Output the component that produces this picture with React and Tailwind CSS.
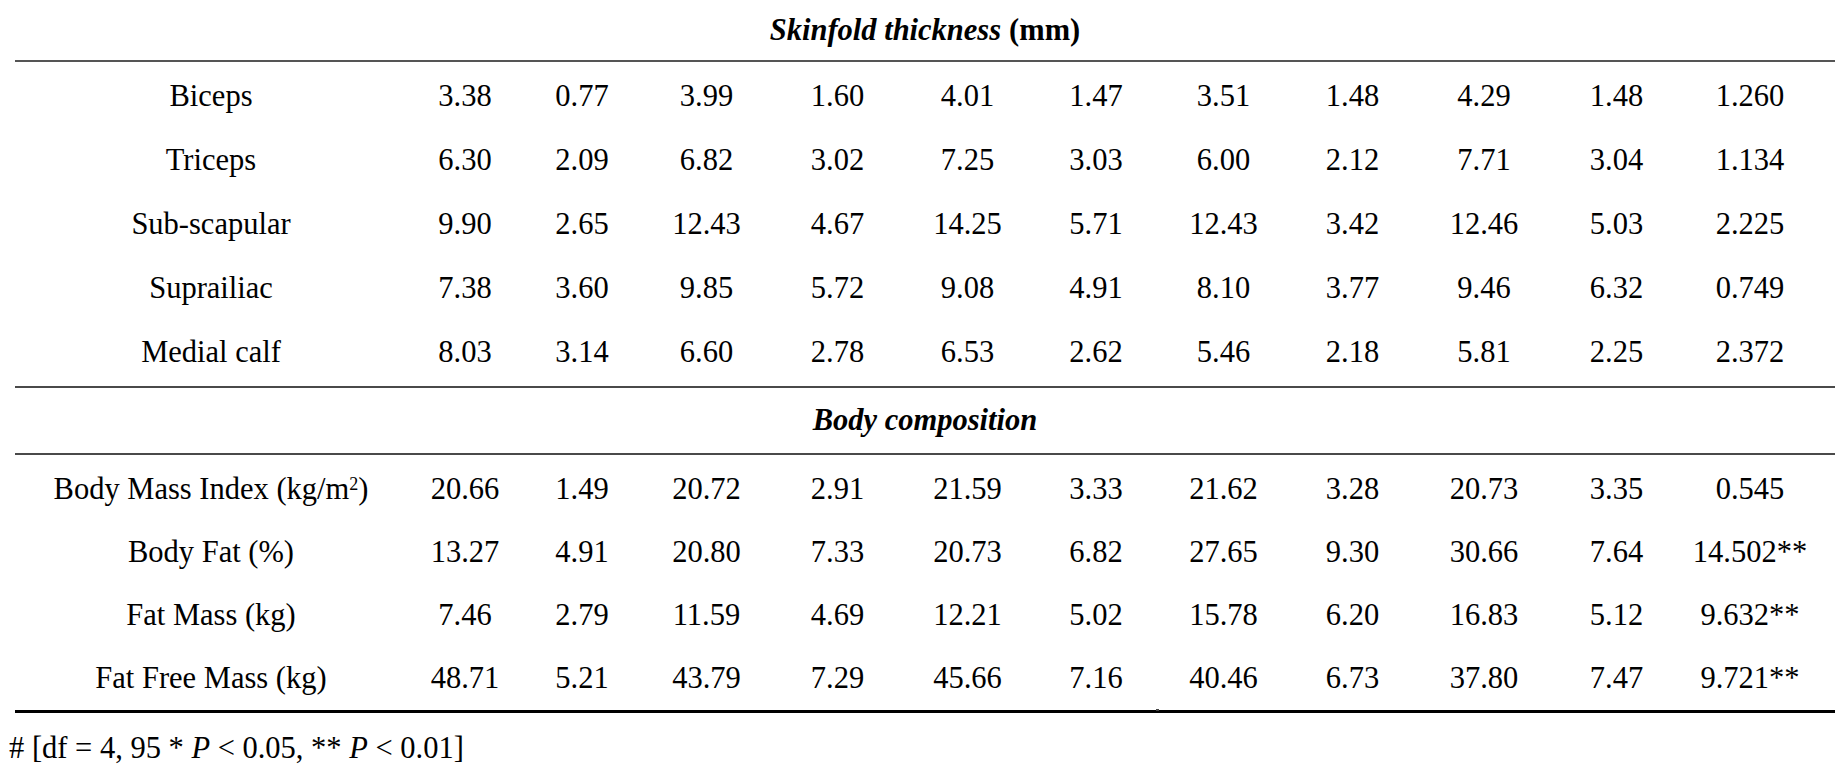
const cols = 'grid grid-cols-[392px_116px_118px_131px_131px_129px_128px_127px_131px_132px_133px_152px]';

const skinfold = [
  ['Biceps', '3.38', '0.77', '3.99', '1.60', '4.01', '1.47', '3.51', '1.48', '4.29', '1.48', '1.260'],
  ['Triceps', '6.30', '2.09', '6.82', '3.02', '7.25', '3.03', '6.00', '2.12', '7.71', '3.04', '1.134'],
  ['Sub-scapular', '9.90', '2.65', '12.43', '4.67', '14.25', '5.71', '12.43', '3.42', '12.46', '5.03', '2.225'],
  ['Suprailiac', '7.38', '3.60', '9.85', '5.72', '9.08', '4.91', '8.10', '3.77', '9.46', '6.32', '0.749'],
  ['Medial calf', '8.03', '3.14', '6.60', '2.78', '6.53', '2.62', '5.46', '2.18', '5.81', '2.25', '2.372'],
];

const body = [
  ['bmi', '20.66', '1.49', '20.72', '2.91', '21.59', '3.33', '21.62', '3.28', '20.73', '3.35', '0.545'],
  ['Body Fat (%)', '13.27', '4.91', '20.80', '7.33', '20.73', '6.82', '27.65', '9.30', '30.66', '7.64', '14.502**'],
  ['Fat Mass (kg)', '7.46', '2.79', '11.59', '4.69', '12.21', '5.02', '15.78', '6.20', '16.83', '5.12', '9.632**'],
  ['Fat Free Mass (kg)', '48.71', '5.21', '43.79', '7.29', '45.66', '7.16', '40.46', '6.73', '37.80', '7.47', '9.721**'],
];

function Row({ cells, height }) {
  return (
    <div className={`${cols} ${height} items-center`}>
      {cells.map((c, i) => (
        <div key={i} className={`text-center whitespace-nowrap ${i === 11 ? 'pr-[18px]' : ''}`}>
          {c === 'bmi' ? (
            <span>Body Mass Index (kg/m<sup className="text-[18px]">2</sup>)</span>
          ) : (
            c
          )}
        </div>
      ))}
    </div>
  );
}

export default function App() {
  return (
    <div className="w-[1842px] h-[773px] bg-white text-black font-['Liberation_Serif',serif] text-[30.5px] leading-none overflow-hidden">
      <div className="pl-[15px] pr-[7px]">
        <div className="h-[60px] flex items-center justify-center">
          <span className="font-bold italic">Skinfold thickness</span>
          <span className="font-bold ml-[8px]">(mm)</span>
        </div>
        <div className="border-t-2 border-[#555]" />
        <div className="pt-[2px] pb-[2px]">
          {skinfold.map((r) => (
            <Row key={r[0]} cells={r} height="h-[64px]" />
          ))}
        </div>
        <div className="border-t-2 border-[#4a4a4a]" />
        <div className="h-[65px] flex items-center justify-center">
          <span className="font-bold italic">Body composition</span>
        </div>
        <div className="border-t-2 border-[#4a4a4a]" />
        <div className="pt-[3px]">
          {body.map((r) => (
            <Row key={r[0]} cells={r} height="h-[63px]" />
          ))}
        </div>
        <div className="relative border-t-[3px] border-black">
          <div className="absolute left-[1141px] -top-[4px] w-[3px] h-[2px] bg-[#444]" />
        </div>
      </div>
      <div className="pl-[9px] pt-[20px]">
        # [df = 4, 95 * <i>P</i> &lt; 0.05, ** <i>P</i> &lt; 0.01]
      </div>
    </div>
  );
}
